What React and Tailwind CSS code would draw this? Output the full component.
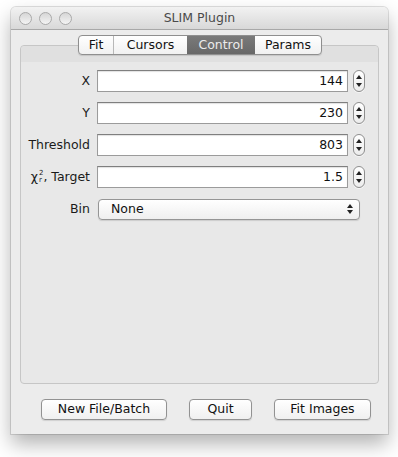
import React from "react";

const font = { fontFamily: '"DejaVu Sans", "Lucida Grande", Verdana, sans-serif' };

function Spinner() {
  return (
    <div className="w-[12px] h-[22px] rounded-[6px] border border-[#8e8e8e] bg-gradient-to-b from-[#ffffff] to-[#ececec] flex flex-col items-center justify-center gap-[4px] shadow-[0_1px_0_rgba(255,255,255,0.6)]">
      <svg width="6" height="4" viewBox="0 0 6 4"><path d="M3 0 L6 4 L0 4 Z" fill="#222" /></svg>
      <svg width="6" height="4" viewBox="0 0 6 4"><path d="M0 0 L6 0 L3 4 Z" fill="#222" /></svg>
    </div>
  );
}

function Row({ label, value }) {
  return (
    <div className="flex items-center h-[22px]">
      <div className="w-[69px] flex justify-end text-[12.5px] text-[#1a1a1a] whitespace-nowrap">{label}</div>
      <div className="ml-[7px] w-[251px] h-[22px] bg-white border border-[#9b9b9b] border-t-[#7f7f7f] shadow-[inset_0_1px_1px_rgba(0,0,0,0.12)] flex items-center justify-end pr-[4px] text-[12.5px] text-[#111]">
        {value}
      </div>
      <div className="ml-[5px]">
        <Spinner />
      </div>
    </div>
  );
}

function Button({ children, w }) {
  return (
    <div
      className={`h-[21px] ${w} rounded-[4px] border border-[#929292] bg-gradient-to-b from-[#ffffff] to-[#f0f0f0] shadow-[0_1px_1px_rgba(0,0,0,0.12)] flex items-center justify-center text-[12.5px] text-[#111]`}
    >
      {children}
    </div>
  );
}

export default function App() {
  return (
    <div className="w-[398px] h-[457px] bg-white pt-[7px] pl-[11px]" style={font}>
      <div className="w-[377px] h-[427px] rounded-t-[5px] bg-[#ececec] shadow-[0_10px_20px_rgba(0,0,0,0.3),0_0_0_1px_rgba(0,0,0,0.12)] flex flex-col overflow-hidden">
        {/* title bar */}
        <div className="relative h-[23px] bg-gradient-to-b from-[#f2f2f2] to-[#d8d8d8] border-b border-[#a8a8a8] flex items-center justify-center shrink-0">
          <div className="absolute left-[8px] top-[5px] flex gap-[7px]">
            <div className="w-[13px] h-[13px] rounded-full border border-[#a9a9a9] bg-gradient-to-b from-[#d6d6d6] to-[#f4f4f4]" />
            <div className="w-[13px] h-[13px] rounded-full border border-[#a9a9a9] bg-gradient-to-b from-[#d6d6d6] to-[#f4f4f4]" />
            <div className="w-[13px] h-[13px] rounded-full border border-[#a9a9a9] bg-gradient-to-b from-[#d6d6d6] to-[#f4f4f4]" />
          </div>
          <span className="text-[12.5px] text-[#4a4a4a]">SLIM Plugin</span>
        </div>

        {/* body */}
        <div className="flex flex-col px-[9px] pt-[5px]">
          <div className="relative z-10 flex justify-center -mb-[10px] pl-[1px]">
            <div className="flex h-[20px] rounded-[4px] border border-[#8f8f8f] bg-gradient-to-b from-[#ffffff] to-[#f1f1f1] overflow-hidden text-[12.5px] text-[#111] shadow-[0_1px_1px_rgba(0,0,0,0.12)]">
              <div className="w-[35px] flex items-center justify-center border-r border-[#b8b8b8]">Fit</div>
              <div className="w-[73px] flex items-center justify-center">Cursors</div>
              <div className="w-[68px] flex items-center justify-center bg-gradient-to-b from-[#7a7a7a] to-[#686868] text-[#ececec]">Control</div>
              <div className="w-[66px] flex items-center justify-center">Params</div>
            </div>
          </div>

          <div className="h-[339px] rounded-[4px] border border-[#c6c6c6] bg-[#e8e8e8] flex flex-col">
            <div className="h-[16px] bg-[#e0e0e0] rounded-t-[4px] shrink-0" />
            <div className="flex flex-col gap-[10px] pt-[8px]">
              <Row label="X" value="144" />
              <Row label="Y" value="230" />
              <Row label="Threshold" value="803" />
              <Row
                label={
                  <span className="inline-flex items-center">
                    <span>χ</span>
                    <span className="inline-flex flex-col text-[7px] leading-[7px] ml-[1px] -mt-[1px]">
                      <span>2</span>
                      <span>r</span>
                    </span>
                    <span>, Target</span>
                  </span>
                }
                value="1.5"
              />
              <div className="flex items-center h-[22px]">
                <div className="w-[69px] text-right text-[12.5px] text-[#1a1a1a]">Bin</div>
                <div className="ml-[8px] w-[262px] h-[21px] rounded-[4px] border border-[#959595] bg-gradient-to-b from-[#ffffff] to-[#efefef] shadow-[0_1px_1px_rgba(0,0,0,0.12)] flex items-center justify-between pl-[12px] pr-[6px] text-[12.5px] text-[#111]">
                  <span>None</span>
                  <div className="flex flex-col gap-[2px]">
                    <svg width="6" height="4" viewBox="0 0 6 4"><path d="M3 0 L6 4 L0 4 Z" fill="#222" /></svg>
                    <svg width="6" height="4" viewBox="0 0 6 4"><path d="M0 0 L6 0 L3 4 Z" fill="#222" /></svg>
                  </div>
                </div>
              </div>
            </div>
          </div>

          <div className="flex items-center pt-[15px] pl-[21px]">
            <Button w="w-[126px]">New File/Batch</Button>
            <div className="ml-[22px]"><Button w="w-[63px]">Quit</Button></div>
            <div className="ml-[22px]"><Button w="w-[97px]">Fit Images</Button></div>
          </div>
        </div>
      </div>
    </div>
  );
}
